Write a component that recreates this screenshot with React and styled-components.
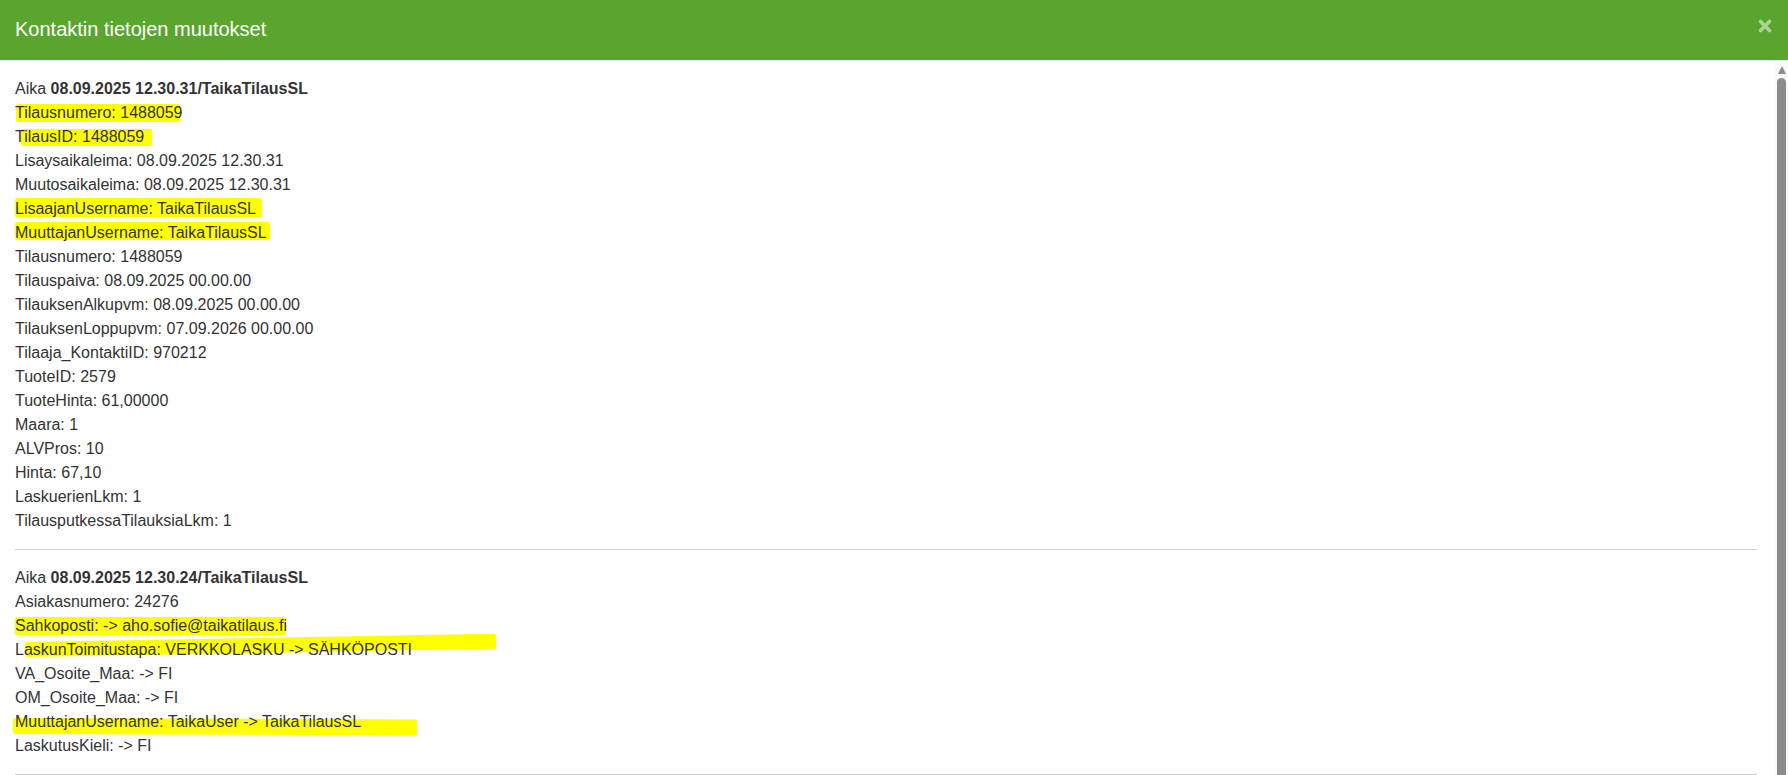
import React from "react";
import styled, { createGlobalStyle } from "styled-components";

const GlobalStyle = createGlobalStyle`
  html, body {
    margin: 0;
    padding: 0;
    overflow: hidden;
    background: #fff;
  }
  body {
    font-family: "Liberation Sans", Arial, sans-serif;
    color: #333;
  }
`;

const Modal = styled.div`
  display: flex;
  flex-direction: column;
  width: 100%;
  height: 100vh;
  background: #fff;
`;

const Header = styled.div`
  flex: none;
  height: 61px;
  box-sizing: border-box;
  display: flex;
  justify-content: space-between;
  align-items: center;
  padding: 0 16px 2px 15px;
  background: #5aa52d;
  border-bottom: 1px solid #e5e5e5;
`;

const Title = styled.h4`
  margin: 0;
  font-size: 20px;
  font-weight: normal;
  color: #fff;
`;

const CloseButton = styled.button`
  align-self: flex-start;
  margin-top: 19px;
  padding: 0;
  border: none;
  background: none;
  cursor: pointer;
  opacity: 0.5;
  line-height: 0;
`;

const Body = styled.div`
  flex: 1;
  min-height: 0;
  display: flex;
`;

const Content = styled.div`
  flex: 1;
  min-width: 0;
  overflow: hidden;
  padding: 16px 18px 0 15px;
  font-size: 16px;
  line-height: 24px;
`;

const ScrollTrack = styled.div`
  flex: none;
  width: 13px;
  display: flex;
  flex-direction: column;
  align-items: center;
  background: #f9f9f9;
`;

const ScrollArrow = styled.div`
  flex: none;
  height: 17px;
  display: flex;
  align-items: center;
  justify-content: center;

  &::before {
    content: "";
    width: 0;
    height: 0;
    border-left: 4.5px solid transparent;
    border-right: 4.5px solid transparent;
    border-bottom: 8px solid #8b8b8b;
  }
`;

const ScrollThumb = styled.div`
  flex: 1;
  width: 9px;
  background: #8b8b8b;
  border-radius: 5px 5px 0 0;
`;

const Entry = styled.div`
  padding-bottom: 16px;
  margin-bottom: 16px;
  border-bottom: 1px solid #cfcfcf;
`;

const Line = styled.div`
  position: relative;
  z-index: 0;
  white-space: nowrap;
`;

const Marker = styled.span`
  position: absolute;
  z-index: -1;
  left: ${(p) => p.$left}px;
  top: ${(p) => p.$top}px;
  width: ${(p) => p.$width}px;
  height: ${(p) => p.$height}px;
  background: #ffff00;
  border-radius: 2px;
  transform: rotate(${(p) => p.$tilt || 0}deg);
  transform-origin: left center;
`;

const CloseIcon = () => (
  <svg width="14" height="14" viewBox="0 0 14 14">
    <path
      d="M2.5 2.5 L11.5 11.5 M11.5 2.5 L2.5 11.5"
      stroke="#fff"
      strokeWidth="3.6"
      strokeLinecap="round"
    />
  </svg>
);

const entries = [
  {
    time: "08.09.2025 12.30.31/TaikaTilausSL",
    lines: [
      { text: "Tilausnumero: 1488059", mark: { left: 1, top: 3, width: 164, height: 18 } },
      { text: "TilausID: 1488059", mark: { left: 6, top: 4, width: 131, height: 17 } },
      { text: "Lisaysaikaleima: 08.09.2025 12.30.31" },
      { text: "Muutosaikaleima: 08.09.2025 12.30.31" },
      { text: "LisaajanUsername: TaikaTilausSL", mark: { left: 0, top: 1, width: 247, height: 19 } },
      { text: "MuuttajanUsername: TaikaTilausSL", mark: { left: 0, top: 1, width: 255, height: 18 } },
      { text: "Tilausnumero: 1488059" },
      { text: "Tilauspaiva: 08.09.2025 00.00.00" },
      { text: "TilauksenAlkupvm: 08.09.2025 00.00.00" },
      { text: "TilauksenLoppupvm: 07.09.2026 00.00.00" },
      { text: "Tilaaja_KontaktiID: 970212" },
      { text: "TuoteID: 2579" },
      { text: "TuoteHinta: 61,00000" },
      { text: "Maara: 1" },
      { text: "ALVPros: 10" },
      { text: "Hinta: 67,10" },
      { text: "LaskuerienLkm: 1" },
      { text: "TilausputkessaTilauksiaLkm: 1" },
    ],
  },
  {
    time: "08.09.2025 12.30.24/TaikaTilausSL",
    lines: [
      { text: "Asiakasnumero: 24276" },
      { text: "Sahkoposti: -> aho.sofie@taikatilaus.fi", mark: { left: 0, top: 3, width: 271, height: 18 } },
      {
        text: "LaskunToimitustapa: VERKKOLASKU -> SÄHKÖPOSTI",
        mark: { left: 10, top: 4, width: 471, height: 15, tilt: -1 },
      },
      { text: "VA_Osoite_Maa: -> FI" },
      { text: "OM_Osoite_Maa: -> FI" },
      {
        text: "MuuttajanUsername: TaikaUser -> TaikaTilausSL",
        mark: { left: -2, top: 8, width: 404, height: 16, tilt: 0.2 },
      },
      { text: "LaskutusKieli: -> FI" },
    ],
  },
];

function App() {
  return (
    <>
      <GlobalStyle />
      <Modal>
        <Header>
          <Title>Kontaktin tietojen muutokset</Title>
          <CloseButton aria-label="Sulje">
            <CloseIcon />
          </CloseButton>
        </Header>
        <Body>
          <Content>
            {entries.map((entry) => (
              <Entry key={entry.time}>
                <Line>
                  Aika <b>{entry.time}</b>
                </Line>
                {entry.lines.map((line, j) => (
                  <Line key={j}>
                    {line.mark && (
                      <Marker
                        $left={line.mark.left}
                        $top={line.mark.top}
                        $width={line.mark.width}
                        $height={line.mark.height}
                        $tilt={line.mark.tilt}
                      />
                    )}
                    {line.text}
                  </Line>
                ))}
              </Entry>
            ))}
          </Content>
          <ScrollTrack>
            <ScrollArrow />
            <ScrollThumb />
          </ScrollTrack>
        </Body>
      </Modal>
    </>
  );
}

export default App;
